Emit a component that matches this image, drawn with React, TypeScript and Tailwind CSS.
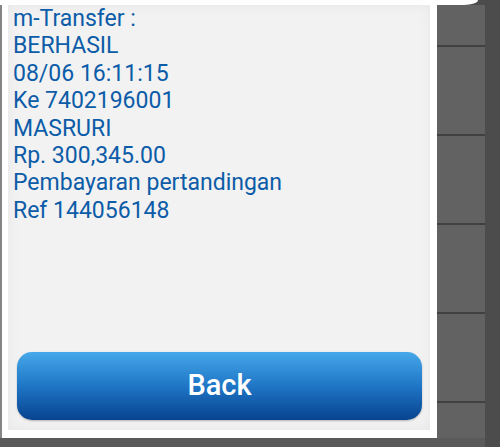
import React from "react";

const lines = [
  "m-Transfer :",
  "BERHASIL",
  "08/06 16:11:15",
  "Ke 7402196001",
  "MASRURI",
  "Rp. 300,345.00",
  "Pembayaran pertandingan",
  "Ref 144056148",
];

// list rows peeking out behind the dialog
const rows = ["h-[42px]", "h-[89px]", "h-[89px]", "h-[89px]", "h-[89px]"];

export default function App() {
  return (
    <div
      className="w-[500px] h-[447px] bg-[#4c4c4c] flex flex-col overflow-hidden"
      style={{ fontFamily: "Roboto, 'Liberation Sans', sans-serif" }}
    >
      {/* header edge */}
      <div className="h-[5px] w-[478px] bg-white rounded-br-[14px_5px] shrink-0" />

      <div className="flex flex-1">
        <div className="w-[485px] bg-[#5a5a5a] flex flex-col">
          <div className="flex">
            <div className="w-[2px] h-[433px] bg-[#858585]" />

            {/* dialog */}
            <div className="w-[435px] h-[433px] bg-white pl-[6px] pr-[7px] pb-[8px] flex">
              <div className="flex-1 flex flex-col bg-[#f2f2f2] shadow-[inset_0_0_14px_rgba(0,0,0,0.05)]">
                <div className="pl-[5px] text-[23px] leading-[27.4px] text-[#0c5ca8] flex-1">
                  {lines.map((l) => (
                    <div key={l}>{l}</div>
                  ))}
                </div>
                <div className="pl-[9px] pr-[8px] pb-[10px]">
                  <button className="w-full h-[68px] rounded-[15px] bg-linear-to-b from-[#46a8e9] via-[#1f76c6] to-[#08438f] text-white text-[29px] font-medium shadow-[0_1px_2px_rgba(0,0,0,0.25)]">
                    Back
                  </button>
                </div>
              </div>
            </div>

            {/* list column */}
            <div className="flex-1 flex flex-col bg-[#626262]">
              {rows.map((h, i) => (
                <div key={i} className={`${h} border-b-2 border-[#414141]`} />
              ))}
            </div>
          </div>
        </div>
        <div className="flex-1 bg-[#4c4c4c]" />
      </div>
    </div>
  );
}
